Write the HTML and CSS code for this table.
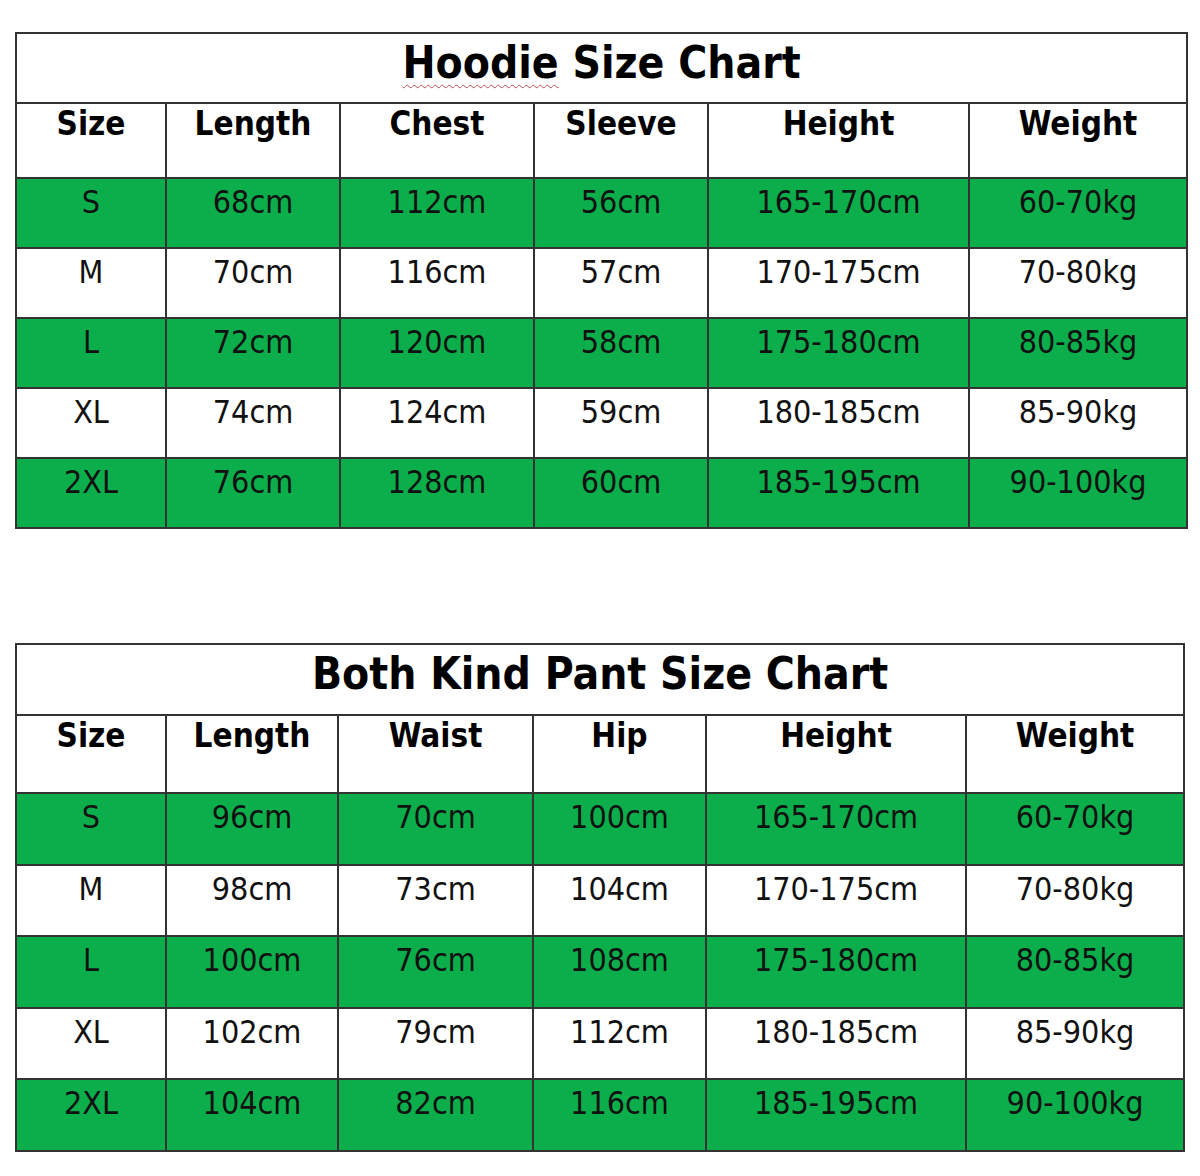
FILE: index.html
```html
<!DOCTYPE html>
<html>
<head>
<meta charset="utf-8">
<title>Size Charts</title>
<link rel="stylesheet" href="styles.css">
</head>
<body>
<div class="page">
  <table class="chart chart-hoodie">
    <colgroup>
      <col class="c1"><col class="c2"><col class="c3"><col class="c4"><col class="c5"><col class="c6">
    </colgroup>
    <tr class="title-row"><td colspan="6"><span class="spell">Hoodie</span> Size Chart</td></tr>
    <tr class="head-row"><td>Size</td><td>Length</td><td>Chest</td><td>Sleeve</td><td>Height</td><td>Weight</td></tr>
    <tr class="green"><td>S</td><td>68cm</td><td>112cm</td><td>56cm</td><td>165-170cm</td><td>60-70kg</td></tr>
    <tr class="white"><td>M</td><td>70cm</td><td>116cm</td><td>57cm</td><td>170-175cm</td><td>70-80kg</td></tr>
    <tr class="green"><td>L</td><td>72cm</td><td>120cm</td><td>58cm</td><td>175-180cm</td><td>80-85kg</td></tr>
    <tr class="white"><td>XL</td><td>74cm</td><td>124cm</td><td>59cm</td><td>180-185cm</td><td>85-90kg</td></tr>
    <tr class="green"><td>2XL</td><td>76cm</td><td>128cm</td><td>60cm</td><td>185-195cm</td><td>90-100kg</td></tr>
  </table>

  <table class="chart chart-pant">
    <colgroup>
      <col class="c1"><col class="c2"><col class="c3"><col class="c4"><col class="c5"><col class="c6">
    </colgroup>
    <tr class="title-row"><td colspan="6">Both Kind Pant Size Chart</td></tr>
    <tr class="head-row"><td>Size</td><td>Length</td><td>Waist</td><td>Hip</td><td>Height</td><td>Weight</td></tr>
    <tr class="green"><td>S</td><td>96cm</td><td>70cm</td><td>100cm</td><td>165-170cm</td><td>60-70kg</td></tr>
    <tr class="white"><td>M</td><td>98cm</td><td>73cm</td><td>104cm</td><td>170-175cm</td><td>70-80kg</td></tr>
    <tr class="green"><td>L</td><td>100cm</td><td>76cm</td><td>108cm</td><td>175-180cm</td><td>80-85kg</td></tr>
    <tr class="white"><td>XL</td><td>102cm</td><td>79cm</td><td>112cm</td><td>180-185cm</td><td>85-90kg</td></tr>
    <tr class="green"><td>2XL</td><td>104cm</td><td>82cm</td><td>116cm</td><td>185-195cm</td><td>90-100kg</td></tr>
  </table>
</div>
</body>
</html>
```
FILE: styles.css
```css
html, body {
  margin: 0;
  padding: 0;
  background: #ffffff;
}

.page {
  padding: 32px 0 0 15px;
}

.chart {
  border-collapse: collapse;
  table-layout: fixed;
  font-family: "DejaVu Sans Condensed", "DejaVu Sans", Tahoma, sans-serif;
  font-stretch: condensed;
  color: #111111;
}

.chart td {
  border: 2px solid #333333;
  text-align: center;
  vertical-align: top;
  padding: 3px 0 0 0;
  box-sizing: border-box;
  font-size: 32px;
  line-height: 40px;
  white-space: nowrap;
  overflow: hidden;
}

.chart-hoodie {
  width: 1171px;
}
.chart-hoodie .c1 { width: 150px; }
.chart-hoodie .c2 { width: 174px; }
.chart-hoodie .c3 { width: 194px; }
.chart-hoodie .c4 { width: 174px; }
.chart-hoodie .c5 { width: 261px; }
.chart-hoodie .c6 { width: 218px; }

.chart-pant {
  width: 1168px;
  margin-top: 114px;
}
.chart-pant .c1 { width: 150px; }
.chart-pant .c2 { width: 172px; }
.chart-pant .c3 { width: 195px; }
.chart-pant .c4 { width: 173px; }
.chart-pant .c5 { width: 260px; }
.chart-pant .c6 { width: 218px; }

.title-row td {
  font-weight: bold;
  font-size: 44px;
  line-height: 50px;
  padding-top: 4px;
  color: #000000;
}

.head-row td {
  font-weight: bold;
  font-size: 33px;
  line-height: 40px;
  padding-top: 0;
  color: #000000;
}

.chart-hoodie .title-row td { height: 70px; }
.chart-hoodie .head-row td { height: 75px; }
.chart-hoodie .green td,
.chart-hoodie .white td { height: 70px; }

.chart-pant .title-row td { height: 71px; }
.chart-pant .head-row td { height: 78px; }
.chart-pant .green td,
.chart-pant .white td { height: 71.5px; }

.green td {
  background: #0cad4b;
}

.white td {
  background: #ffffff;
}

.spell {
  text-decoration: underline wavy #c0504d;
  text-decoration-thickness: 1px;
  text-underline-offset: 6px;
}
```
